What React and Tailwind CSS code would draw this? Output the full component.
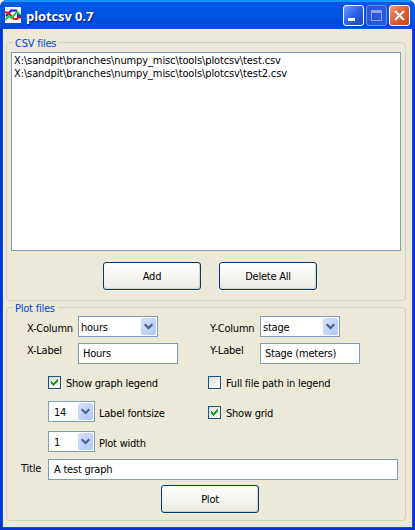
import React from "react";

function Label({ children, className = "" }) {
  return <span className={`block shrink-0 whitespace-pre leading-[13px] ${className}`}>{children}</span>;
}

function AppIcon() {
  return (
    <svg className="ml-[5px] shrink-0" width="16" height="16" viewBox="0 0 16 16" fill="none">
      <rect width="16" height="16" fill="#fff" />
      <path d="M1 9 L4 6 L6 3.5 H11 L13 6 V9 H16" stroke="#1414e8" strokeWidth="1.9" />
      <path d="M0 5.5 H3 L6 8.5 L9 12 H12 L13 10.5 H16" stroke="#f01414" strokeWidth="1.9" />
      <path d="M0 13 L4 9 L6.5 11 L12 5 L15.5 8" stroke="#10d43c" strokeWidth="1.9" />
    </svg>
  );
}

function CaptionButton({ className, children }) {
  return (
    <div className={`h-[21px] w-[21px] shrink-0 rounded-[3px] border ${className}`}>
      <svg width="19" height="19" viewBox="0 0 19 19" fill="none" shapeRendering="crispEdges">
        {children}
      </svg>
    </div>
  );
}

function Group({ title, className, children }) {
  return (
    <section className={`relative ml-[3px] w-[400px] rounded-[4px] border border-[#d0d0bf] ${className}`}>
      <h2 className="absolute -top-[6px] left-[6px] h-[13px] whitespace-nowrap bg-[#ece9d8] pl-[2px] pr-[3px] text-[#0046d5]">
        {title}
      </h2>
      {children}
    </section>
  );
}

function Button({ children, className = "" }) {
  return (
    <div
      className={`flex h-7 w-[98px] shrink-0 items-start justify-center rounded-[3px] border border-[#003c74] bg-linear-to-b from-white via-[#f5f5f1] to-[#ecebe5] pt-[7px] shadow-[inset_-1px_-1px_1px_#d6d0c5,0_1px_0_#f7f5ed] ${className}`}
    >
      {children}
    </div>
  );
}

function Combo({ children, className = "" }) {
  return (
    <div className={`flex h-[21px] shrink-0 items-start justify-between border border-[#7f9db9] bg-white p-px ${className}`}>
      {children}
      <svg width="15" height="17" viewBox="0 0 15 17" className="shrink-0 rounded-[2px] bg-linear-to-br from-[#d5e1fd] to-[#aec8f7]">
        <path d="M3.7 6.2 L7.5 10 L11.3 6.2" fill="none" stroke="#4d6185" strokeWidth="2.2" />
      </svg>
    </div>
  );
}

function Field({ children, className = "" }) {
  return <div className={`h-[21px] shrink-0 border border-[#7f9db9] bg-white pt-[3px] ${className}`}>{children}</div>;
}

function Check({ checked }) {
  return (
    <svg width="13" height="13" viewBox="1 1 11 11" className="shrink-0 border border-[#1c5180] bg-linear-to-br from-[#dcdcd7] to-white" shapeRendering="crispEdges">
      {checked && (
        <path d="M3 5h1v3h-1zM4 6h1v3h-1zM5 7h1v3h-1zM6 6h1v3h-1zM7 5h1v3h-1zM8 4h1v3h-1zM9 3h1v3h-1z" fill="#21a121" />
      )}
    </svg>
  );
}

export default function App() {
  return (
    <div className="h-[530px] w-[415px] overflow-hidden bg-white font-['DejaVu_Sans_Condensed','DejaVu_Sans',sans-serif] text-[11px] leading-[13px] tracking-[-0.23px] text-black [font-stretch:condensed]">
      <main className="flex h-full flex-col overflow-hidden rounded-t-[7px] bg-[#0831d9]">
        <header className="flex h-[29px] shrink-0 items-start bg-linear-to-b from-[#0058e6] from-0% via-[#0054e3] via-60% to-[#0046ca] pt-[5px] shadow-[inset_0_1px_0_#0997ff,inset_0_2px_1px_#3a93ff]">
          <div className="flex w-[343px] shrink-0 items-start pt-[2px]">
            <AppIcon />
            <h1 className="ml-[5px] whitespace-pre font-['Open_Sans',sans-serif] text-[13px] font-bold leading-[18px] tracking-[-0.1px] text-white [font-stretch:normal] [text-shadow:1px_1px_1px_#0f1089]">plotcsv 0.7</h1>
          </div>
          <div className="flex gap-[2px]">
            <CaptionButton className="border-white bg-linear-to-br from-[#6a9bff] via-[#2a62ea] to-[#1848c8]">
              <path d="M4 12h7v3h-7z" fill="#fff" />
            </CaptionButton>
            <CaptionButton className="border-[#6f91ed] bg-[#2859db]">
              <path d="M4 4h11v11h-11zM5 7v7h9v-7z" fill="#8fa5ed" fillRule="evenodd" />
            </CaptionButton>
            <CaptionButton className="border-white bg-linear-to-br from-[#f09a7d] via-[#e35a32] to-[#d0451a]">
              <path d="M5 5l9 9M14 5l-9 9" stroke="#fff" strokeWidth="2.3" shapeRendering="auto" />
            </CaptionButton>
          </div>
        </header>

        <div className="mb-[3px] ml-[3px] mr-[3px] flex min-h-0 flex-1 flex-col bg-[#ece9d8] shadow-[0_0_0_1px_#0855dd]">
          <Group title="CSV files" className="mt-[13px] h-[259px]">
            <div className="ml-1 mt-[9px] h-[199px] w-[390px] border border-[#7f9db9] bg-white pl-[2px] pt-px tracking-[-0.11px]">
              <Label>{"X:\\sandpit\\branches\\numpy_misc\\tools\\plotcsv\\test.csv"}</Label>
              <Label>{"X:\\sandpit\\branches\\numpy_misc\\tools\\plotcsv\\test2.csv"}</Label>
            </div>
            <div className="ml-24 mt-[11px] flex gap-[18px]">
              <Button>Add</Button>
              <Button>Delete All</Button>
            </div>
          </Group>

          <Group title="Plot files" className="mt-[6px] h-[214px]">
            <div className="mt-2 flex h-[27px] items-start">
              <Label className="ml-5 w-[51px] pt-[6px]">X-Column</Label>
              <Combo className="w-20"><Label className="pl-[1px] pt-[3px]">hours</Label></Combo>
              <Label className="ml-[52px] w-[50px] pt-[6px]">Y-Column</Label>
              <Combo className="w-20"><Label className="pl-[1px] pt-[3px]">stage</Label></Combo>
            </div>
            <div className="flex h-[33px] items-start">
              <Label className="ml-5 w-[51px] pt-px">X-Label</Label>
              <Field className="w-[100px] pl-1">Hours</Field>
              <Label className="ml-8 w-[50px] pt-px">Y-Label</Label>
              <Field className="w-[100px] pl-1">Stage (meters)</Field>
            </div>
            <div className="flex h-[25px] items-start pl-[41px]">
              <Check checked />
              <Label className="w-[147px] pl-[5px] pt-px">Show graph legend</Label>
              <Check />
              <Label className="pl-[5px] pt-px">Full file path in legend</Label>
            </div>
            <div className="flex h-[30px] items-start pl-[41px]">
              <Combo className="w-[47px]"><Label className="pl-1 pt-[3px]">14</Label></Combo>
              <Label className="w-[113px] pl-1 pt-[6px]">Label fontsize</Label>
              <div className="flex pt-[5px]">
                <Check checked />
                <Label className="pl-[5px] pt-px">Show grid</Label>
              </div>
            </div>
            <div className="flex h-7 items-start pl-[41px]">
              <Combo className="w-[47px]"><Label className="pl-1 pt-[3px]">1</Label></Combo>
              <Label className="pl-1 pt-[6px]">Plot width</Label>
            </div>
            <div className="flex h-[26px] items-start">
              <Label className="ml-[14px] w-[27px] pt-[3px]">Title</Label>
              <Field className="w-[350px] pl-[5px]">A test graph</Field>
            </div>
            <Button className="ml-[154px]">Plot</Button>
          </Group>
        </div>
      </main>
    </div>
  );
}
